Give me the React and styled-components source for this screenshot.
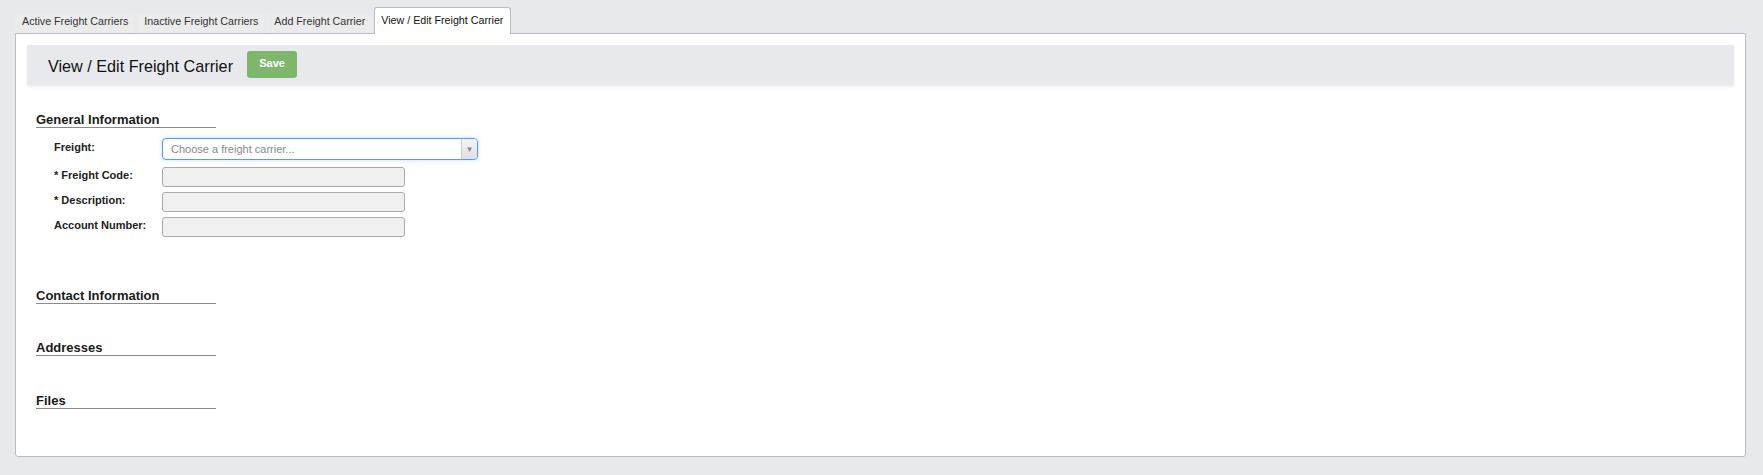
import React from 'react';
import styled, { createGlobalStyle } from 'styled-components';

const GlobalStyle = createGlobalStyle`
  html, body {
    margin: 0;
    padding: 0;
    background: #e8e9ec;
    font-family: "Liberation Sans", Arial, sans-serif;
    color: #222;
  }
`;

const Page = styled.div`
  padding: 7px 17px 19px 15px;
`;

const TabBar = styled.div`
  display: flex;
  align-items: flex-end;
  gap: 3px;
  position: relative;
  z-index: 1;
`;

const Tab = styled.div`
  font-size: 10.7px;
  line-height: 13px;
  color: ${p => (p.active ? '#111' : '#333')};
  white-space: nowrap;
  ${p =>
    p.active
      ? `
    background: #fff;
    border: 1px solid #b8bdc5;
    border-bottom: none;
    border-radius: 3px 3px 0 0;
    padding: 6px 7px 7px 6px;
    margin-bottom: -1px;
  `
      : `
    background: #ebebec;
    padding: 1px 6px 5px 7px;
  `}
`;

const Panel = styled.div`
  background: #fff;
  border: 1px solid #b8bdc5;
  border-radius: 0 2px 3px 3px;
  padding: 11px;
`;

const HeaderBar = styled.div`
  display: flex;
  align-items: center;
  gap: 14px;
  height: 40px;
  padding-left: 21px;
  background: #e8e9ec;
  box-shadow: 0 2px 3px rgba(0, 0, 0, 0.07);
`;

const Title = styled.h2`
  margin: 0;
  font-size: 16.2px;
  font-weight: normal;
  color: #111;
  padding-top: 3px;
`;

const SaveButton = styled.button`
  width: 50px;
  height: 27px;
  margin-top: -2px;
  border: none;
  border-radius: 3px;
  background: #7db76b;
  color: #fff;
  font-family: inherit;
  font-size: 11px;
  font-weight: bold;
  padding: 0 0 3px;
  cursor: pointer;
`;

const Body = styled.div`
  display: flex;
  flex-direction: column;
  gap: 36.5px;
  padding: 27px 9px 36.5px;
`;

const Section = styled.section``;

const SectionHeading = styled.h3`
  margin: 0;
  width: 180px;
  font-size: 13px;
  line-height: 15px;
  font-weight: bold;
  color: #1a1a1a;
  border-bottom: 1px solid #8a8a8a;
`;

const Form = styled.div`
  display: grid;
  grid-template-columns: 108px auto;
  row-gap: 5px;
  align-items: start;
  justify-items: start;
  padding-left: 18px;
  margin-top: 10px;
  margin-bottom: 14px;
`;

const Label = styled.label`
  font-size: 11px;
  line-height: 14px;
  font-weight: bold;
  color: #222;
  padding-top: ${p => (p.select ? '2px' : '1px')};
`;

const SelectBox = styled.div`
  display: flex;
  align-items: stretch;
  width: 316px;
  height: 22px;
  box-sizing: border-box;
  border: 1px solid #5897fb;
  border-radius: 4px;
  background: #fff;
  box-shadow: 0 0 4px rgba(88, 151, 251, 0.35);
  margin-bottom: 2px;
  overflow: hidden;
`;

const Placeholder = styled.span`
  flex: 1;
  font-size: 11px;
  line-height: 20px;
  color: #888;
  padding-left: 8px;
`;

const Arrow = styled.span`
  width: 15px;
  border-left: 1px solid #ccc;
  background: linear-gradient(#f4f4f4, #e0e0e0);
  display: flex;
  align-items: center;
  justify-content: center;
  color: #888;
  font-size: 8px;
`;

const TextInput = styled.input`
  width: 243px;
  height: 20px;
  box-sizing: border-box;
  border: 1px solid #a9a9a9;
  border-radius: 3px;
  background: #f0f0f0;
  font-family: inherit;
  font-size: 11px;
  padding: 0 6px;
`;

const fields = ['* Freight Code:', '* Description:', 'Account Number:'];
const tabs = ['Active Freight Carriers', 'Inactive Freight Carriers', 'Add Freight Carrier', 'View / Edit Freight Carrier'];

export default function App() {
  return (
    <Page>
      <GlobalStyle />
      <TabBar>
        {tabs.map((t, i) => (
          <Tab key={t} active={i === tabs.length - 1}>{t}</Tab>
        ))}
      </TabBar>
      <Panel>
        <HeaderBar>
          <Title>View / Edit Freight Carrier</Title>
          <SaveButton>Save</SaveButton>
        </HeaderBar>
        <Body>
          <Section>
            <SectionHeading>General Information</SectionHeading>
            <Form>
              <Label select>Freight:</Label>
              <SelectBox>
                <Placeholder>Choose a freight carrier...</Placeholder>
                <Arrow>▼</Arrow>
              </SelectBox>
              {fields.map(f => (
                <React.Fragment key={f}>
                  <Label>{f}</Label>
                  <TextInput type="text" />
                </React.Fragment>
              ))}
            </Form>
          </Section>
          <Section>
            <SectionHeading>Contact Information</SectionHeading>
          </Section>
          <Section>
            <SectionHeading>Addresses</SectionHeading>
          </Section>
          <Section>
            <SectionHeading>Files</SectionHeading>
          </Section>
        </Body>
      </Panel>
    </Page>
  );
}
